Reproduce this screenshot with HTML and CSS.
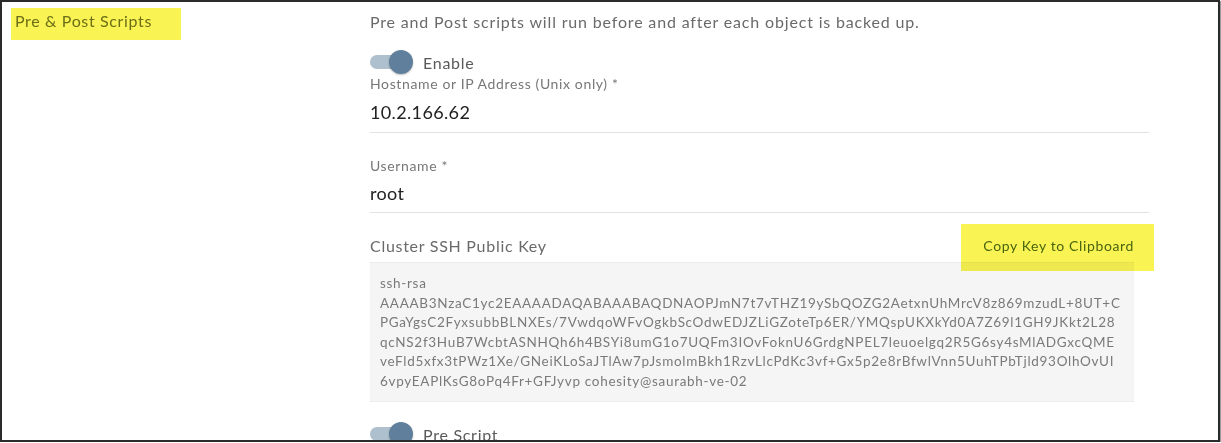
FILE: index.html
```html
<!DOCTYPE html>
<html lang="en">
<head>
<meta charset="utf-8">
<title>Pre &amp; Post Scripts</title>
<link rel="stylesheet" href="styles.css">
</head>
<body>
<div class="frame">
  <div class="section">
    <div class="side">
      <span class="side-title">Pre &amp; Post Scripts</span>
      <span class="hl hl-side"></span>
    </div>
    <div class="main">
      <p class="desc">Pre and Post scripts will run before and after each object is backed up.</p>
      <div class="toggle-row">
        <span class="toggle"><span class="track"></span><span class="knob"></span></span>
        <span class="toggle-label">Enable</span>
      </div>
      <div class="field field-first">
        <div class="field-label">Hostname or IP Address (Unix only) *</div>
        <div class="field-value">10.2.166.62</div>
      </div>
      <div class="field field-second">
        <div class="field-label">Username *</div>
        <div class="field-value">root</div>
      </div>
      <div class="key-head">
        <span class="key-title">Cluster SSH Public Key</span>
        <span class="copy">Copy Key to Clipboard</span>
        <span class="hl hl-copy"></span>
      </div>
      <div class="key-box">ssh-rsa<br>AAAAB3NzaC1yc2EAAAADAQABAAABAQDNAOPJmN7t7vTHZ19ySbQOZG2AetxnUhMrcV8z869mzudL+8UT+C<br>PGaYgsC2FyxsubbBLNXEs/7VwdqoWFvOgkbScOdwEDJZLiGZoteTp6ER/YMQspUKXkYd0A7Z69l1GH9JKkt2L28<br>qcNS2f3HuB7WcbtASNHQh6h4BSYi8umG1o7UQFm3IOvFoknU6GrdgNPEL7leuoelgq2R5G6sy4sMlADGxcQME<br>veFld5xfx3tPWz1Xe/GNeiKLoSaJTlAw7pJsmolmBkh1RzvLlcPdKc3vf+Gx5p2e8rBfwlVnn5UuhTPbTjld93OlhOvUI<br>6vpyEAPlKsG8oPq4Fr+GFJyvp cohesity@saurabh-ve-02</div>
      <div class="toggle-row toggle-pre">
        <span class="toggle"><span class="track"></span><span class="knob"></span></span>
        <span class="toggle-label">Pre Script</span>
      </div>
    </div>
  </div>
</div>
</body>
</html>
```

FILE: styles.css
```css
* { box-sizing: border-box; }
html, body { margin: 0; padding: 0; background: #fff; }
body {
  font-family: Lato, "Open Sans", "Liberation Sans", sans-serif;
  letter-spacing: 0.045em;
}

.frame {
  width: 1220px;
  height: 442px;
  border: 2px solid #2b2b2b;
  box-shadow: 1px 1px 0 #9a9a9a;
  overflow: hidden;
  background: #fff;
}

.section {
  display: grid;
  grid-template-columns: 368px 780px;
}

.side {
  position: relative;
  padding: 8px 0 0 13px;
}
.side-title {
  font-size: 16px;
  line-height: 22px;
  color: #6f7440;
  letter-spacing: 0.04em;
}

.hl {
  position: absolute;
  background: rgba(247, 240, 40, 0.8);
  mix-blend-mode: multiply;
  pointer-events: none;
}
.hl-side { left: 9px; top: 6px; width: 170px; height: 32px; }

.main { padding-top: 10px; }

.desc {
  margin: 0;
  font-size: 16px;
  line-height: 20px;
  color: #6a6a6a;
  letter-spacing: 0.052em;
}

.toggle-row {
  display: flex;
  align-items: center;
  gap: 10px;
  height: 24px;
  margin-top: 18px;
}
.toggle {
  position: relative;
  width: 43px;
  height: 24px;
  flex: none;
}
.track {
  position: absolute;
  left: 0; top: 5px;
  width: 40px; height: 14px;
  border-radius: 7px;
  background: #aebfcd;
}
.knob {
  position: absolute;
  right: 0; top: 0;
  width: 24px; height: 24px;
  border-radius: 50%;
  background: #5f7f9c;
  box-shadow: 0 1px 2px rgba(0,0,0,0.25);
}
.toggle-label {
  font-size: 16px;
  color: #5a5a5a;
}

.field {
  width: 779px;
  border-bottom: 1px solid #e2e2e2;
  padding-bottom: 7px;
}
.field-first { margin-top: 1px; }
.field-second { margin-top: 24px; padding-bottom: 6px; }
.field-label {
  font-size: 14px;
  line-height: 18px;
  color: #777;
  letter-spacing: 0.045em;
}
.field-value {
  font-size: 18px;
  line-height: 26px;
  margin-top: 6px;
  color: #222;
  letter-spacing: 0.02em;
}
.field-second .field-value { margin-top: 5px; }

.key-head {
  position: relative;
  display: flex;
  justify-content: space-between;
  align-items: center;
  width: 764px;
  margin-top: 22px;
  height: 20px;
}
.key-title {
  font-size: 16px;
  color: #6a6a6a;
}
.copy {
  font-size: 14px;
  color: #4a6a28;
  letter-spacing: 0.045em;
}
.hl-copy { left: 591px; top: -11px; width: 193px; height: 47px; }

.key-box {
  width: 764px;
  margin-top: 7px;
  padding: 11px 10px 10px 10px;
  background: #f5f5f5;
  border-top: 1px solid #ebebeb;
  border-bottom: 1px solid #ececec;
  font-size: 13.5px;
  line-height: 19.5px;
  color: #7a7a7a;
  white-space: nowrap;
  letter-spacing: 0.052em;
}

.toggle-pre { margin-top: 20px; }
```
